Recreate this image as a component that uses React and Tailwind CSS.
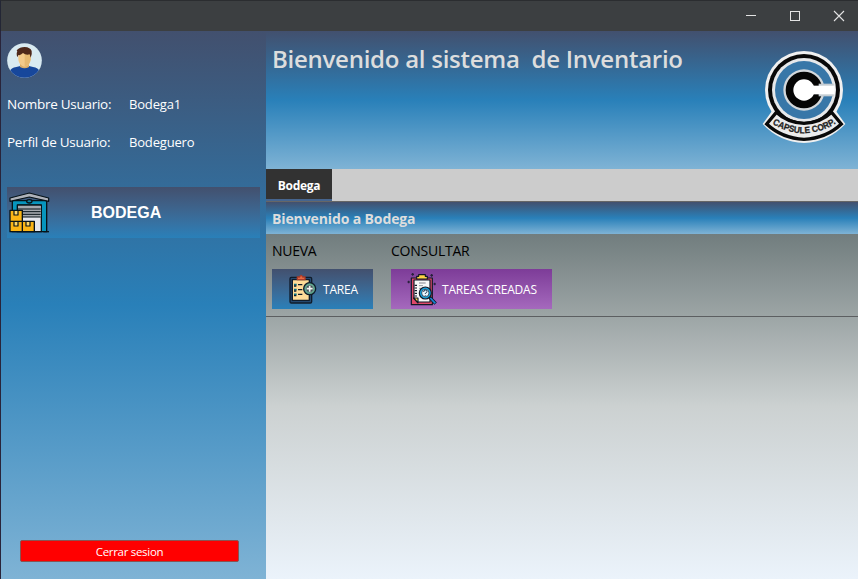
function Avatar() {
  return (
    <svg className="block h-[35px] w-[35px]" viewBox="0 0 105 105">
      <defs>
        <clipPath id="face">
          <circle cx="52.5" cy="52.5" r="52" />
        </clipPath>
      </defs>
      <g clipPath="url(#face)">
        <rect width="105" height="105" fill="#d9eaf1" />
        <path d="M8 105V86q4-12 20-14l12-3h26l12 3q16 2 20 14v19z" fill="#17479b" />
        <path d="M39 60h27v12q-13 8-27 0z" fill="#d9ac68" />
        <path d="M34 26h37v23q-1 14-11 20-7 4-14 0-11-6-12-20z" fill="#f3ca8a" />
        <path d="M53 28h18v21q-2 18-18 22z" fill="#e6b971" />
        <path d="M31 43q-4-13 0-17-3-3-1-5 8-9 23-9 17 1 21 12 2 9-3 20l-3-10q-12 3-20-4-8 8-14 6z" fill="#4e281a" />
      </g>
    </svg>
  );
}

function Warehouse() {
  return (
    <svg className="block h-[44px] w-[42px]" viewBox="0 0 126 132">
      <g stroke="#071319" strokeWidth="4" strokeLinejoin="round">
        <path d="M10 29h103v93H10z" fill="#0795bd" />
        <path d="M61 6 3 21v10l58-13 58 13V21z" fill="#aeb2ba" strokeWidth="3.5" />
        <ellipse cx="61" cy="31" rx="8" ry="5" fill="#0f83a5" />
        <path d="M25 42h72v80H25z" fill="#e5e7ee" />
        <path d="M27 44h68v34H27z" fill="#a4a8ae" stroke="none" />
        <path d="M25 42h72M27 54h68M27 62h68M27 70h68M27 78h68" strokeWidth="3" />
        <path d="M3 58h37v33H3zM3 91h37v31H3zM40 91h36v31H40z" fill="#fbb515" />
        <path d="M15 60v12h12V60M15 93v12h12V93M51 93v12h12V93" fill="#ffd868" strokeWidth="3.5" />
        <path d="M103 122h17" />
      </g>
    </svg>
  );
}

function NewTask() {
  return (
    <svg className="block h-[30px] w-[28px]" viewBox="0 0 84 90">
      <g stroke="#101c2b" strokeWidth="4" strokeLinejoin="round">
        <rect x="3" y="10" width="65" height="77" rx="4" fill="#24486f" />
        <path d="M10 17h51v62H10z" fill="#ffdc98" />
        <path d="M25 17v-8h7q4-10 9 0h7v8z" fill="#e86a42" stroke="#a93c2b" />
        <path d="M15 32h8M15 47h8M15 61h8" stroke="#087485" strokeWidth="5" />
        <path d="M15 36h7M27 32h13M15 51h7M27 47h13M15 65h7M27 61h13" />
        <circle cx="62" cy="44" r="18" fill="#58a58c" />
        <circle cx="62" cy="44" r="12" fill="#454f59" stroke="#83c7aa" strokeWidth="2" />
        <path d="M62 35v18M53 44h18" stroke="#f3f7f3" strokeWidth="5" />
      </g>
    </svg>
  );
}

function CreatedTasks() {
  return (
    <svg className="block h-[33px] w-[30px]" viewBox="0 0 90 99">
      <g stroke="#101827" strokeWidth="3.5" strokeLinejoin="round">
        <path d="M13 15h63v80H13z" fill="#df4869" />
        <path d="M21 21h48v66H32L21 77z" fill="#f7f9f8" />
        <path d="M20 75h13v15z" fill="#ffd44c" />
        <path d="M31 18h-2v-8h6V5h20v5h6v8z" fill="#ffd444" />
        <path d="M36 30h20" stroke="#6b7078" strokeWidth="2.5" />
        <path d="M23 37h7M23 45h7M23 53h7M23 61h7M23 69h7" />
        <path d="M36 38h12M36 46h7" stroke="#7b8a93" strokeWidth="2.5" />
        <path d="m68 73 18 19" stroke="#101827" strokeWidth="10" />
        <path d="m70 75 15 16" stroke="#1687d8" strokeWidth="5" />
        <circle cx="55" cy="60" r="18" fill="#16a2dc" />
        <circle cx="55" cy="60" r="11" fill="#e9f7ff" strokeWidth="2" />
        <path d="M50 57q0-6 5-6t5 5q0 3-5 5v2m0 3v2" fill="none" stroke="#17334a" strokeWidth="3" />
        <path d="M17 0v8M13 4h8M74 3v8M70 7h8M5 23v8M1 27h8M83 29v8M79 33h8" stroke="#262039" />
      </g>
    </svg>
  );
}

function CapsuleLogo() {
  return (
    <svg className="block h-[110px] w-[108px]" viewBox="0 0 324 330">
      <defs>
        <path id="ribbon" d="M63 249Q160 311 262 248" />
      </defs>
      <circle cx="162" cy="150" r="117" fill="#f0f0f0" />
      <path d="M72 205 38 252Q88 306 162 309q74-3 124-57l-34-47z" fill="#f0f0f0" />
      <circle cx="162" cy="150" r="108" fill="#080808" />
      <circle cx="162" cy="150" r="96" fill="#e6e8ea" />
      <circle cx="162" cy="150" r="87" fill="#3877a8" />
      <circle cx="162" cy="150" r="62" fill="#d3d8dc" />
      <circle cx="162" cy="150" r="55" fill="#050505" />
      <path d="M206 131h45v38h-45z" fill="#c4ccd2" />
      <circle cx="162" cy="150" r="32" fill="#fff" />
      <path d="M160 137h94v26h-94z" fill="#fff" />
      <path d="M79 217 50 252q46 43 112 46 66-3 112-46l-29-35q-34 32-83 33-49-1-83-33z" fill="#ececec" stroke="#090909" strokeWidth="10" />
      <text className="font-['Liberation_Sans'] text-[27px] font-bold" fill="#222" stroke="#222" strokeWidth=".8">
        <textPath href="#ribbon" startOffset="4" textLength="203" lengthAdjust="spacingAndGlyphs">
          CAPSULE CORP.
        </textPath>
      </text>
    </svg>
  );
}

function TitleBar() {
  return (
    <header className="flex h-[31px] shrink-0 justify-end border-t border-l border-t-[#2b2d30] border-l-[#232635] bg-[#3c3f41]">
      <svg className="block h-[30px] w-[138px]" viewBox="0 0 138 30" fill="none" stroke="#e3e3e3" shapeRendering="crispEdges">
        <path d="M26 14.5h10" />
        <rect x="70.5" y="10.5" width="9" height="9" />
        <path d="m114 10 10 10m0-10-10 10" shapeRendering="auto" strokeWidth="1.1" />
      </svg>
    </header>
  );
}

export default function App() {
  return (
    <div className="flex h-[579px] w-[858px] flex-col overflow-hidden font-['Open_Sans','Noto_Sans',sans-serif]">
      <TitleBar />
      <div className="flex min-h-0 flex-1">
        <aside className="flex w-[266px] shrink-0 flex-col border-l border-[#29243a] bg-linear-[to_bottom,#42506e_0%,#2980b9_50%,#7fb3d5_100%] pt-3 pl-1.5 text-white">
          <Avatar />
          <dl className="mt-[16px] grid grid-cols-[122px_1fr] gap-y-[18px] text-[13px] leading-5">
            <dt className="text-[13.5px] tracking-[-0.27px]">Nombre Usuario:</dt>
            <dd className="tracking-[-0.18px]">Bodega1</dd>
            <dt className="text-[13.5px] tracking-[-0.27px]">Perfil de Usuario:</dt>
            <dd className="tracking-[-0.18px]">Bodeguero</dd>
          </dl>
          <button className="mt-[35px] flex h-[51px] w-[253px] items-center bg-linear-to-b from-[#42506e] to-[#2980b9] pl-0.5 text-left">
            <Warehouse />
            <span className="ml-10 font-['Liberation_Sans',sans-serif] text-base font-bold">BODEGA</span>
          </button>
          <button className="mt-auto mb-[17px] ml-[13px] flex h-[22px] w-[219px] items-center justify-center rounded-[2px] border border-[#895452] bg-[#ff0000] pt-0.5 text-[11.5px] tracking-[-0.3px]">
            Cerrar sesion
          </button>
        </aside>
        <main className="flex min-w-0 flex-1 flex-col">
          <section className="flex h-[138px] shrink-0 justify-between bg-linear-[to_bottom,#42506e_0%,#2980b9_50%,#7fb3d5_100%]">
            <h1 className="mt-3 ml-1.5 whitespace-pre text-[24px] leading-8 font-semibold tracking-[-0.26px] text-[#dddddd]">Bienvenido al sistema  de Inventario</h1>
            <div className="mt-[9px]">
              <CapsuleLogo />
            </div>
          </section>
          <nav className="flex h-[33px] shrink-0 border-b border-[#666] bg-[#cccccc]">
            <button className="h-8 w-[66px] border-b-2 border-[#46658f] bg-[#323232] pt-1 text-xs font-bold tracking-[-0.3px] text-white">Bodega</button>
          </nav>
          <h2 className="h-8 shrink-0 bg-linear-[to_bottom,#42506e_0%,#2980b9_50%,#7fb3d5_100%] pl-1.5 text-[14px] leading-[34px] font-bold tracking-[-0.12px] text-[#dddddd]">Bienvenido a Bodega</h2>
          <section className="flex-1 bg-linear-[to_bottom,#717d7e_0%,#ccd1d1_50%,#ebf3fb_100%]">
            <div className="flex h-[83px] gap-[18px] border-b border-[#5c5f61] pt-[7px] pl-1.5">
              <div>
                <p className="text-[14px] leading-5 tracking-[-0.25px] text-black">NUEVA</p>
                <button className="mt-2 flex h-10 w-[101px] items-center bg-linear-to-b from-[#42506e] to-[#2980b9] pl-[17px] text-xs text-white">
                  <NewTask />
                  <span className="mt-0.5 ml-1.5 tracking-[-0.2px]">TAREA</span>
                </button>
              </div>
              <div>
                <p className="text-[14px] leading-5 tracking-[-0.25px] text-black">CONSULTAR</p>
                <button className="mt-2 flex h-10 w-[161px] items-center bg-linear-to-b from-[#7d3c98] to-[#a569bd] pl-4 text-xs text-white">
                  <CreatedTasks />
                  <span className="mt-0.5 ml-[5px] tracking-[-0.2px] whitespace-nowrap">TAREAS CREADAS</span>
                </button>
              </div>
            </div>
          </section>
        </main>
      </div>
    </div>
  );
}
